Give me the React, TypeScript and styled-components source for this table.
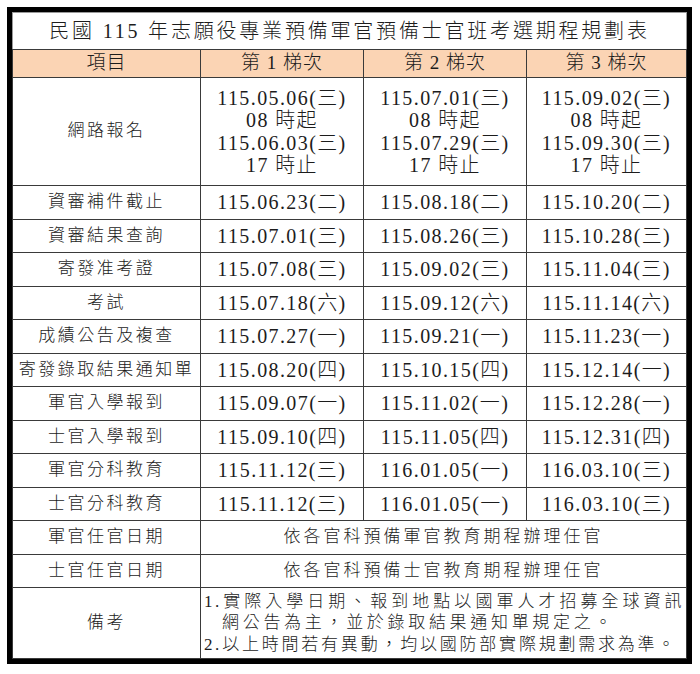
import React from 'react';
import styled, { createGlobalStyle } from 'styled-components';

const GlobalStyle = createGlobalStyle`
  html, body {
    margin: 0;
    padding: 0;
    background: #ffffff;
  }
  body {
    font-family: "Liberation Serif", "Noto Sans CJK TC", serif;
    color: #1c1c1c;
  }
`;

type Row = {
  label: string;
  dates?: string[];
  merged?: string;
};

const rows: Row[] = [
  { label: '資審補件截止', dates: ['115.06.23(二)', '115.08.18(二)', '115.10.20(二)'] },
  { label: '資審結果查詢', dates: ['115.07.01(三)', '115.08.26(三)', '115.10.28(三)'] },
  { label: '寄發准考證', dates: ['115.07.08(三)', '115.09.02(三)', '115.11.04(三)'] },
  { label: '考試', dates: ['115.07.18(六)', '115.09.12(六)', '115.11.14(六)'] },
  { label: '成績公告及複查', dates: ['115.07.27(一)', '115.09.21(一)', '115.11.23(一)'] },
  { label: '寄發錄取結果通知單', dates: ['115.08.20(四)', '115.10.15(四)', '115.12.14(一)'] },
  { label: '軍官入學報到', dates: ['115.09.07(一)', '115.11.02(一)', '115.12.28(一)'] },
  { label: '士官入學報到', dates: ['115.09.10(四)', '115.11.05(四)', '115.12.31(四)'] },
  { label: '軍官分科教育', dates: ['115.11.12(三)', '116.01.05(一)', '116.03.10(三)'] },
  { label: '士官分科教育', dates: ['115.11.12(三)', '116.01.05(一)', '116.03.10(三)'] },
  { label: '軍官任官日期', merged: '依各官科預備軍官教育期程辦理任官' },
  { label: '士官任官日期', merged: '依各官科預備士官教育期程辦理任官' },
];

const signup = [
  ['115.05.06(三)', '08 時起', '115.06.03(三)', '17 時止'],
  ['115.07.01(三)', '08 時起', '115.07.29(三)', '17 時止'],
  ['115.09.02(三)', '08 時起', '115.09.30(三)', '17 時止'],
];

export default function App() {
  return (
    <>
      <GlobalStyle />
      <Frame>
        <Table>
          <colgroup>
            <col style={{ width: 188 }} />
            <col style={{ width: 163 }} />
            <col style={{ width: 163 }} />
            <col />
          </colgroup>
          <tbody>
            <tr>
              <TitleCell colSpan={4}>民國 115 年志願役專業預備軍官預備士官班考選期程規劃表</TitleCell>
            </tr>
            <tr>
              <HeadCell>項目</HeadCell>
              <HeadCell>第 1 梯次</HeadCell>
              <HeadCell>第 2 梯次</HeadCell>
              <HeadCell>第 3 梯次</HeadCell>
            </tr>
            <tr>
              <LabelCell $h={107}>網路報名</LabelCell>
              {signup.map((lines, i) => (
                <DateCell key={i} $h={107}>
                  <Stack>
                    {lines.map((l, j) => (
                      <span key={j}>{l}</span>
                    ))}
                  </Stack>
                </DateCell>
              ))}
            </tr>
            {rows.map((r) => (
              <tr key={r.label}>
                <LabelCell $h={32.5}>{r.label}</LabelCell>
                {r.merged ? (
                  <MergedCell colSpan={3}>{r.merged}</MergedCell>
                ) : (
                  r.dates!.map((d, i) => (
                    <DateCell key={i} $h={32.5}>
                      {d}
                    </DateCell>
                  ))
                )}
              </tr>
            ))}
            <tr>
              <LabelCell $h={70}>備考</LabelCell>
              <NoteCell colSpan={3}>
                <NoteLine $width={480}>1.實際入學日期、報到地點以國軍人才招募全球資訊</NoteLine>
                <NoteLine $width={392} $indent>網公告為主，並於錄取結果通知單規定之。</NoteLine>
                <NoteLine $width={473}>2.以上時間若有異動，均以國防部實際規劃需求為準。</NoteLine>
              </NoteCell>
            </tr>
          </tbody>
        </Table>
      </Frame>
    </>
  );
}

const Frame = styled.div`
  margin: 7px 0 0 7px;
  width: 685px;
  box-sizing: border-box;
  border: 5px solid #000;
  background: #fff;
`;

const Table = styled.table`
  width: 100%;
  border-collapse: collapse;
  table-layout: fixed;
  border: 1px solid #9a9a9a;

  td {
    border: 1px solid #3a3a3a;
    padding: 0;
    text-align: center;
    vertical-align: middle;
    line-height: 1.2;
    font-weight: 300;
  }
`;

const TitleCell = styled.td`
  height: 36px;
  font-size: 20px;
  letter-spacing: 2.8px;
  background: #fff;
  && {
    border-top-color: #9a9a9a;
    border-left-color: #9a9a9a;
    border-right-color: #9a9a9a;
  }
`;

const HeadCell = styled.td`
  height: 27px;
  font-size: 19px;
  letter-spacing: 1px;
  background: #fbd4b4;
`;

const LabelCell = styled.td<{ $h: number }>`
  height: ${(p) => p.$h}px;
  font-size: 17px;
  letter-spacing: 2.5px;
  white-space: nowrap;
`;

const DateCell = styled.td<{ $h: number }>`
  height: ${(p) => p.$h}px;
  font-size: 20px;
  letter-spacing: 1.4px;
  white-space: nowrap;
`;

const Stack = styled.div`
  display: flex;
  flex-direction: column;
  align-items: center;
  line-height: 22.5px;
`;

const MergedCell = styled.td`
  font-size: 17px;
  letter-spacing: 3px;
`;

const NoteCell = styled.td`
  && {
    text-align: left;
    padding-left: 3px;
    line-height: 21.5px;
  }
  font-size: 17px;
  letter-spacing: 2.6px;
`;

const NoteLine = styled.div<{ $indent?: boolean; $width: number }>`
  white-space: nowrap;
  padding-left: ${(p) => (p.$indent ? '18px' : '0')};
  width: ${(p) => p.$width}px;
  text-align: justify;
  text-align-last: justify;
`;
